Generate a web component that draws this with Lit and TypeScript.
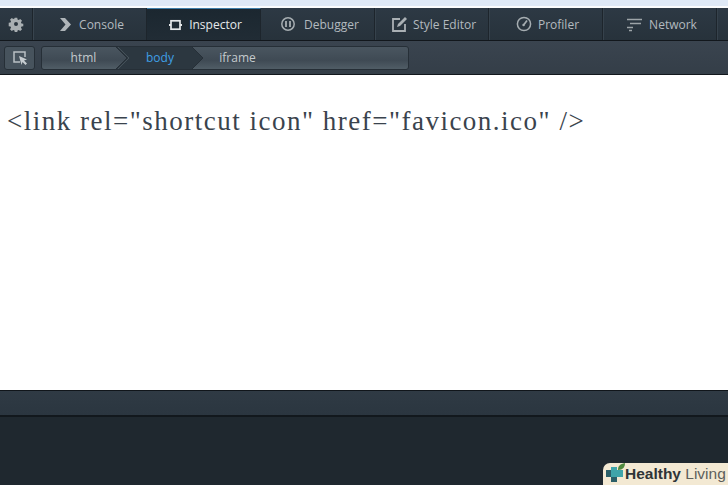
import { LitElement, html, css, svg } from "lit";
import { customElement } from "lit/decorators.js";

const tabs = [
  { label: "Console", gap: 8, icon: svg`<path d="M1 2h5l6 6.500-6 6.500H1l5.500-6.500z" fill="#aeb4b8"/>`, iw: 12 },
  { label: "Inspector", sel: true, gap: 7, icon: svg`<rect x="2" y="3.800" width="9" height="8.400" fill="none" stroke="#e4e7e9" stroke-width="1.700"/><path d="M0 8h2M11 8h2" stroke="#e4e7e9" stroke-width="2" fill="none"/>`, iw: 13 },
  { label: "Debugger", gap: 8, icon: svg`<circle cx="8" cy="8" r="6.200" fill="none" stroke="#a6adb1" stroke-width="1.500"/><path d="M6 5v6M10 5v6" stroke="#a6adb1" stroke-width="1.800"/>`, iw: 16 },
  { label: "Style Editor", gap: 5, icon: svg`<path d="M9 3H2v12h12V8" fill="none" stroke="#aab0b4" stroke-width="1.800"/><path d="M6 11l1-3 7-7 2 2-7 7z" fill="#aab0b4"/>`, iw: 17 },
  { label: "Profiler", gap: 6, icon: svg`<circle cx="8" cy="8" r="6.600" fill="none" stroke="#a6adb1" stroke-width="1.500"/><path d="M8 8.500l3-4" stroke="#a6adb1" stroke-width="1.700"/><circle cx="7.600" cy="9" r="1.300" fill="#a6adb1"/>`, iw: 16 },
  { label: "Network", gap: 7, icon: svg`<path d="M1 3.500h15M4 7.500h11M1 11.500h6M3 14.500h3" stroke="#9da4a8" stroke-width="1.700" fill="none"/>`, iw: 16 },
];

@customElement("app-root")
export class AppRoot extends LitElement {
  static styles = css`
    :host { display: block; width: 728px; height: 485px; overflow: hidden; position: relative; background: #fff; }
    .chrome { height: 6px; background: #dfe9f6; border-bottom: 2px solid #fbfcfd; }
    .tabs {
      height: 32px; display: flex; background: linear-gradient(#2d3944, #27323b);
      border-bottom: 1px solid #12171c; font: 12px "Open Sans", "DejaVu Sans", sans-serif; color: #b3babf;
    }
    .gear { width: 33px; box-sizing: border-box; flex: none; display: flex; align-items: center; justify-content: center; border-right: 1px solid #1d252c; box-shadow: 1px 0 0 #38444e; }
    .tab { width: 114px; flex: none; box-sizing: border-box; padding-left: 4px; display: flex; align-items: center; justify-content: center; border-right: 1px solid #1d252c; box-shadow: 1px 0 0 #36424c; }
    .tab.sel { background: linear-gradient(#1b2730, #212c35); color: #e6e9eb; border-top: 1px solid #3f7ea8; box-shadow: none; }
    .tools {
      height: 34px; box-sizing: border-box; display: flex; align-items: center; gap: 6px; padding: 4px 0 4px 4px;
      background: linear-gradient(#3a444f, #343e48); border-bottom: 1px solid #12171c;
      font: 12px "Open Sans", "DejaVu Sans", sans-serif; color: #c4cacd;
    }
    .pick { width: 31px; height: 24px; box-sizing: border-box; border: 1px solid #262f37; border-radius: 3px; background: #47535d; display: flex; align-items: center; justify-content: center; }
    .crumbs { width: 368px; height: 24px; box-sizing: border-box; border: 1px solid #262f37; border-radius: 3px; display: flex; position: relative; background: linear-gradient(#4a5660, #3f4a54 60%, #505d66); overflow: hidden; }
    .crumb { display: flex; align-items: center; justify-content: center; flex: none; }
    .c1 { width: 83px; }
    .c2 { width: 70px; color: #3f9fe6; }
    .c3 { width: 85px; }
    .arrow { position: absolute; left: 0; top: 0; width: 100%; height: 100%; }
    .label { position: relative; }
    .main { height: 315px; background: #fff; box-sizing: border-box; padding-top: 30px; padding-left: 7px; font: 27px "Liberation Serif", "Times New Roman", serif; color: #3a434d; white-space: pre; line-height: 33px; letter-spacing: 1.500px; }
    .bar { height: 24px; background: linear-gradient(#2f3a44, #2b3640); border-top: 1px solid #10151a; border-bottom: 2px solid #12181d; }
    .foot { height: 68px; background: #1f282f; }
    .badge { position: absolute; right: 0; bottom: 0; width: 125px; height: 22px; box-sizing: border-box; padding-left: 22px; background: #f3e9d3; border-top-left-radius: 7px; display: flex; align-items: center; font: 15.500px "Liberation Sans", Arial, sans-serif; white-space: pre; color: #3c3c3c; }
    .badge b { color: #2f3437; }
    .badge span { color: #5d5f5c; }
    .logo { position: absolute; left: 2px; top: -4px; }
  `;
  render() {
    return html`
      <div class="chrome"></div>
      <div class="tabs">
        <div class="gear">
          <svg width="16" height="16" viewBox="0 0 16 16"><path d="M6.600 1h2.800l.3 2 1.300.6 1.700-1.200 2 2-1.200 1.700.6 1.300 2 .3v2.800l-2 .3-.6 1.300 1.200 1.700-2 2-1.700-1.200-1.300.6-.3 2H6.600l-.3-2-1.300-.6-1.700 1.200-2-2 1.200-1.700-.6-1.300-2-.3V6.600l2-.3.6-1.300-1.200-1.700 2-2L5 2.500l1.300-.6z" transform="translate(.8 .8) scale(.9)" fill="#a9afb2"/><circle cx="8" cy="8" r="2" fill="#2b3640"/></svg>
        </div>
        ${tabs.map((t) => html`
          <div class="tab ${t.sel ? "sel" : ""}" style="gap:${t.gap}px">
            <svg width=${t.iw} height="16" viewBox="0 0 ${t.iw} 16">${t.icon}</svg>
            <span>${t.label}</span>
          </div>`)}
      </div>
      <div class="tools">
        <div class="pick">
          <svg width="16" height="16" viewBox="0 0 16 16"><path d="M8 12H2V2h11v5" fill="none" stroke="#b9c0c4" stroke-width="1.500"/><path d="M7 6l8 3.500-3 1 3 3-1.500 1.500-3-3-1 3z" fill="#c6ccd0"/></svg>
        </div>
        <div class="crumbs">
          <svg class="arrow" viewBox="0 0 366 22" preserveAspectRatio="none">
            <path d="M74 0h76l11 11-11 11H74l11-11z" fill="#2c3740"/>
            <path d="M74 0l11 11-11 11M150 0l11 11-11 11" fill="none" stroke="#262f37"/>
            <path d="M76 0l11 11-11 11" fill="none" stroke="#56626b" stroke-opacity=".6"/>
          </svg>
          <div class="crumb c1"><span class="label">html</span></div>
          <div class="crumb c2"><span class="label">body</span></div>
          <div class="crumb c3"><span class="label">iframe</span></div>
        </div>
      </div>
      <div class="main">&lt;link rel="shortcut icon" href="favicon.ico" /&gt;</div>
      <div class="bar"></div>
      <div class="foot"></div>
      <div class="badge">
        <svg class="logo" width="22" height="26" viewBox="0 0 22 26">
          <path d="M6 8h6v3h6v7h-6v5H6v-5H1v-7h5z" fill="#3fa5aa"/>
          <path d="M1 11h5v7H1zM6 18h6v5H6z" fill="#2b5f68"/>
          <path d="M13 11c0-4 2-6 7-7 0 4-2 7-7 7z" fill="#4f8a3e"/>
        </svg>
        <b>Healthy</b><span> Living</span>
      </div>
    `;
  }
}
